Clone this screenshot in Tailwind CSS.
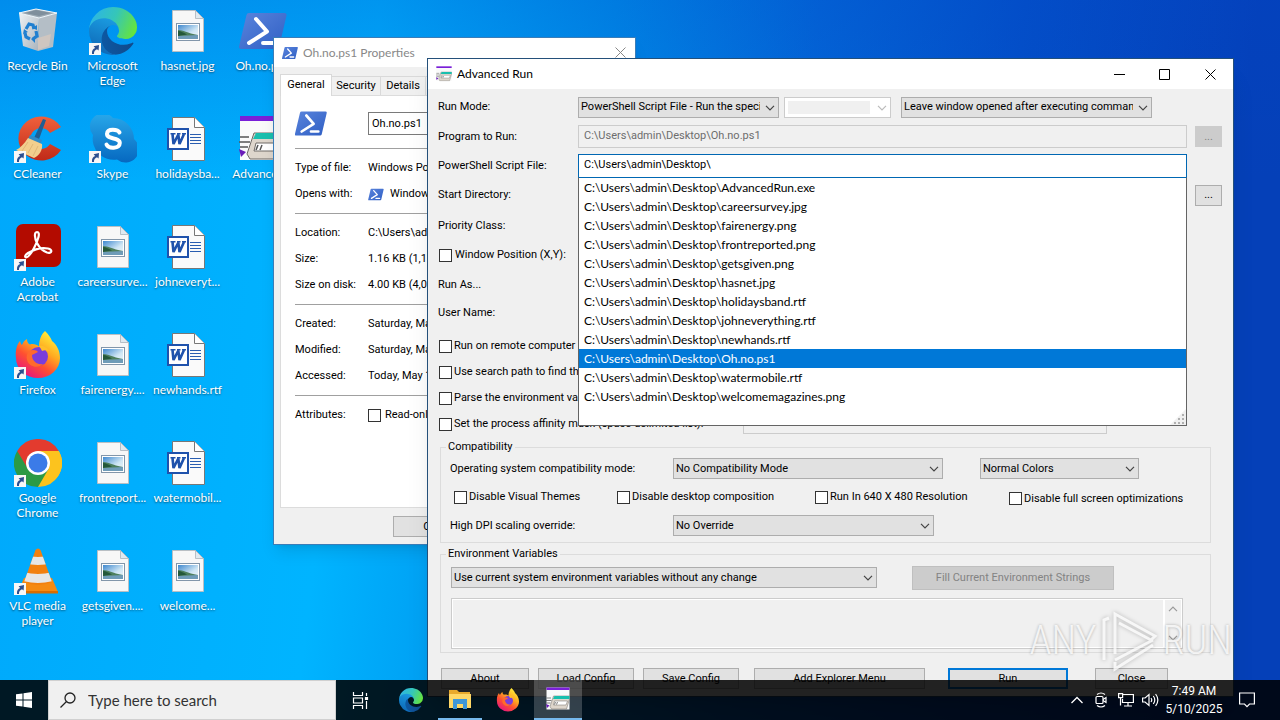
<!DOCTYPE html>
<html lang="en">
<head>
  <meta charset="UTF-8">
  <meta name="viewport" content="width=device-width, initial-scale=1.0">
  <title>Desktop</title>
  <!-- Tailwind CSS -->
  <script src="https://cdn.jsdelivr.net/npm/@tailwindcss/browser@4"></script>
</head>
<body class="relative h-screen overflow-hidden bg-[linear-gradient(to_bottom,rgba(0,70,200,0.28),transparent_25%),linear-gradient(97deg,#00a8fb_0%,#00b4ff_28%,#0090ea_45%,#0468d8_60%,#0450c8_75%,#0540b8_92%)] font-['Roboto','Liberation_Sans',sans-serif] text-[11px] leading-[14px] text-black">

  <!-- Icon library -->
  <svg class="absolute size-0" aria-hidden="true">
    <defs>
      <linearGradient id="g-ps" x1="0" y1="0" x2="1" y2="1"><stop offset="0" stop-color="#5a84dc"/><stop offset="1" stop-color="#2f5fc4"/></linearGradient>
      <linearGradient id="g-edge1" x1="0" y1="0" x2="1" y2="0"><stop offset="0" stop-color="#0c59a4"/><stop offset="1" stop-color="#114a8b"/></linearGradient>
      <linearGradient id="g-edge2" x1="0.6" y1="0" x2="0.3" y2="1"><stop offset="0" stop-color="#1b9de2"/><stop offset="1" stop-color="#0d66b5"/></linearGradient>
      <linearGradient id="g-edge3" x1="0" y1="0.3" x2="1" y2="0.6"><stop offset="0" stop-color="#2cb4e8"/><stop offset="0.5" stop-color="#35c6b8"/><stop offset="1" stop-color="#66e43c"/></linearGradient>
      <linearGradient id="g-fox" x1="0.8" y1="0.1" x2="0.25" y2="0.95"><stop offset="0" stop-color="#ffe838"/><stop offset="0.35" stop-color="#ffa820"/><stop offset="0.65" stop-color="#ff5030"/><stop offset="1" stop-color="#e8187c"/></linearGradient>
      <linearGradient id="g-sky" x1="0" y1="0" x2="1" y2="1"><stop offset="0" stop-color="#3f88cf"/><stop offset="0.6" stop-color="#cfe6f4"/><stop offset="1" stop-color="#eef6fa"/></linearGradient>
      <linearGradient id="g-skype" x1="0" y1="0" x2="0" y2="1"><stop offset="0" stop-color="#28a8ea"/><stop offset="1" stop-color="#0668c0"/></linearGradient>
      <linearGradient id="g-cc" x1="0" y1="0" x2="0" y2="1"><stop offset="0" stop-color="#f0603c"/><stop offset="1" stop-color="#c02a18"/></linearGradient>
      <linearGradient id="g-bin" x1="0" y1="0" x2="1" y2="1"><stop offset="0" stop-color="#eef2f5"/><stop offset="1" stop-color="#a9b3bc"/></linearGradient>
      <clipPath id="c-cone"><path d="M21.500 3q2.500-3 5 0L38 35q-14 6-28 0z"/></clipPath>
    </defs>

    <symbol id="i-shortcut" viewBox="0 0 12 12">
      <rect width="12" height="12" fill="#f7f7f7"/>
      <path d="M3 11C2.600 7.500 4 5.500 6.200 5L4.600 3.300 10 2 9.600 7.600 8 6.300C6 7 4.800 8.500 5 11z" fill="#2b4f90"/>
    </symbol>

    <symbol id="i-bin" viewBox="0 0 48 48">
      <path d="M5 6l20 5-1 33-15-5z" fill="url(#g-bin)"/>
      <path d="M25 11l18-5-4 34-15 4z" fill="#b4bec6"/>
      <path d="M5 6l17-4 21 4-18 5z" fill="#9eabb5" stroke="#f5f8fa"/>
      <path d="M22 3l15 3-12 3-14-3z" fill="#7f8f9c"/>
      <path d="M24 31l13-4-2 12-11 4z" fill="#cfc6c0"/>
      <g fill="none" stroke="#1f7fd0" stroke-width="3.200">
        <path d="M12 22l3-5 4 1 1 4"/><path d="M22 24l1 5-4 3"/><path d="M16 32l-4-2-1-4"/>
      </g>
      <path d="M18 21l5 2 0-5zM21 29l-4 3 4 4zM9 27l5-2-4-3z" fill="#1f7fd0"/>
    </symbol>

    <symbol id="i-edge" viewBox="0 0 256 256">
      <path fill="url(#g-edge1)" d="M231 190.500c-3.400 1.800-6.900 3.400-10.500 4.700a101.800 101.800 0 01-35.900 6.500c-47.300 0-88.500-32.500-88.500-74.300 0-11.400 6.400-21.900 16.400-27.300-42.800 1.800-53.800 46.400-53.800 72.500 0 73.900 68.100 81.400 82.800 81.400 7.900 0 19.800-2.300 27-4.600l1.300-.4a128.300 128.300 0 0066.600-52.800 4 4 0 00-5.400-5.700z"/>
      <path fill="url(#g-edge2)" d="M105.700 241.400a79.200 79.200 0 01-22.700-21.300 80.700 80.700 0 0129.500-120c3.200-1.500 8.500-4.100 15.600-4a32.400 32.400 0 0125.700 13 31.900 31.900 0 016.300 18.700c0-.2 24.500-79.600-80-79.600-43.900 0-80 41.700-80 78.200a130.200 130.200 0 0012.100 56 128 128 0 00156.400 67 75.500 75.500 0 01-62.900-8z"/>
      <path fill="url(#g-edge3)" d="M152.300 148.900c-.8 1-3.300 2.500-3.300 5.700 0 2.600 1.700 5.100 4.700 7.200 14.400 10 41.500 8.700 41.600 8.700a59.600 59.600 0 0030.300-8.300 61.400 61.400 0 0030.400-52.900c.3-22.400-8-37.300-11.300-43.900C223.500 23.900 177.700 0 128 0A128 128 0 000 126.200c.5-36.500 36.800-66 80-66 3.500 0 23.500.3 42 10a72.600 72.600 0 0130.900 29.300c6.100 10.600 7.200 24.100 7.200 29.500s-2.700 13.300-7.800 19.900z"/>
    </symbol>

    <symbol id="i-image" viewBox="0 0 48 48">
      <path d="M8.500 3.500h23l8 8v33h-31z" fill="#f7f7f7" stroke="#b9bfc4"/>
      <path d="M31.500 3.500v8h8z" fill="#dfe9f0" stroke="#a9b3ba" stroke-width=".8"/>
      <rect x="12.500" y="16.500" width="23" height="17" fill="#fff" stroke="#8296aa"/>
      <rect x="14" y="18" width="20" height="14" fill="url(#g-sky)"/>
      <path d="M14 23c5 0 9 3 20 5v4H14z" fill="#4d7f5c"/>
      <path d="M14 24c3 0 6 2 9 3.500L14 29z" fill="#24583a"/>
      <path d="M14 29l20-1v4H14z" fill="#6f9cb8"/>
    </symbol>

    <symbol id="i-word" viewBox="0 0 48 48">
      <path d="M8.500 2.500h22l10 10v33h-32z" fill="#fafafa" stroke="#777"/>
      <path d="M30.500 2.500v10h10" fill="#fff" stroke="#777"/>
      <path d="M26 19.500h11M26 22.500h11M26 25.500h11M26 28.500h11" stroke="#2a5db0"/>
      <rect x="4" y="14" width="20" height="20" fill="#fff" stroke="#1f52ac" stroke-width="2"/>
      <path d="M8.500 19l1 10L14.300 19.500l1.200 9.500L20 19" fill="none" stroke="#1f52ac" stroke-width="2.600" stroke-linejoin="bevel"/>
      <path d="M6.500 18.800h5M13 18.800h3.500M18 18.800h4" stroke="#1f52ac" stroke-width="1.400"/>
    </symbol>

    <symbol id="i-ps" viewBox="0 0 48 40">
      <path d="M10 2h35.500a2 2 0 012 2.500l-7.500 32a2.500 2.500 0 01-2.500 1.500H2a2 2 0 01-2-2.500L7.500 4A2.500 2.500 0 0110 2z" fill="url(#g-ps)"/>
      <path d="M17 8l11 12.500L10 32M24 32h11" fill="none" stroke="#fff" stroke-width="4" stroke-linecap="round" stroke-linejoin="round"/>
    </symbol>

    <symbol id="i-ccleaner" viewBox="0 0 48 48">
      <path d="M47 12A23 22 0 1 0 47 35L36 29A10.500 10.500 0 1 1 36 18z" fill="url(#g-cc)"/>
      <path d="M29 4l3 1-8 22-5-2z" fill="#1f5f94"/>
      <path d="M16 20l12 5-2 6-13-5z" fill="#2f8cc8"/>
      <path d="M14 23l14 6c1 6-3 12-8 14L2 35c4-2 8-6 12-12z" fill="#f2cf8d"/>
      <path d="M14 27L8 36M19 29l-5 9M24 31l-5 10" stroke="#e0b878"/>
    </symbol>

    <symbol id="i-skype" viewBox="0 0 48 48">
      <path d="M24 3A21 21 0 0145 24a12 12 0 01-17 20.500A21 21 0 014 20 12 12 0 0124 3z" fill="url(#g-skype)"/>
      <path d="M30.500 17.500C29 14.500 18.500 13 18 18.800 17.800 25 31 22 30.800 28 30.500 34 19.500 34 17.500 29.500" fill="none" stroke="#fff" stroke-width="4" stroke-linecap="round"/>
    </symbol>

    <symbol id="i-acrobat" viewBox="0 0 48 48">
      <rect x="2" y="1" width="45" height="43" rx="7" fill="#b30b00"/>
      <path d="M23 9c-3 0-2.500 6 0 11 2 4 6 8 10 9.500 5 1.500 6-3 1-4C27 24 19 27 14 30c-4.500 3-3 6 0 3.500C18 30 23 20 24.500 14c.7-3 .3-5-1.500-5z" fill="none" stroke="#fff" stroke-width="2.200"/>
    </symbol>

    <symbol id="i-firefox" viewBox="0 0 48 48">
      <path d="M31 0c4 4 6 7 7 10 5 4 8 10 8 17A22 20 0 012 27C1 20 3 13 6 10c.5 2 1 3 2 4 1-3 3-5 5-6 0 3 1 4.500 3 5.500 3-1 7 0 9 2 0-6 2-12 6-15.500z" fill="url(#g-fox)"/>
      <circle cx="24.500" cy="25.500" r="9.500" fill="#7a3ddb"/>
      <path d="M15 20c4-2 8-1 9 1-2 1-4 2-6 3 0 6 5 10 11 9-5 5-14 3-16-4-1-3 0-7 2-9z" fill="#ff6a2c"/>
      <path d="M25 15c3-1 8 1 10 5-3-1-5-1-7 0-1-2-2-4-3-5z" fill="#ffbe2a"/>
    </symbol>

    <symbol id="i-chrome" viewBox="0 0 48 48">
      <path d="M24 24L44.800 12A24 24 0 0124 48z" fill="#fcc31e"/>
      <path d="M24 24V48A24 24 0 013.200 12z" fill="#2b9a46"/>
      <path d="M24 12h20.800a24 24 0 01-3 28z" fill="#fcc31e"/>
      <path d="M3.200 12A24 24 0 0144.800 12H24L14 30z" fill="#e33b2e"/>
      <path d="M34.500 30L24 48 13 29z" fill="#2b9a46"/>
      <circle cx="24" cy="24" r="12" fill="#fff"/>
      <circle cx="24" cy="24" r="9.500" fill="#3b7be8"/>
    </symbol>

    <symbol id="i-vlc" viewBox="0 0 48 48">
      <path d="M10 31h28l6 14H4z" fill="#f58a12"/>
      <path d="M4 44h40v2.500H4z" fill="#d76c00"/>
      <g clip-path="url(#c-cone)">
        <path d="M0 0h48v48H0z" fill="#f2800f"/>
        <path d="M10 8q14 4 28 0v8q-14 4-28 0zM5 24q19 6 38 0v9q-19 6-38 0z" fill="#e6e6e6"/>
      </g>
    </symbol>

    <symbol id="i-advrun" viewBox="0 0 48 48">
      <path d="M1 1h46v44H1z" fill="#fafafa"/>
      <path d="M1 1h46v5H1z" fill="#7a1fd8"/>
      <path d="M1 22h9M0 27h11M1 32h8" stroke="#555" stroke-width="1.500"/>
      <path d="M0 34l7 3-5 5z" fill="#6a1bb8"/>
      <path d="M15 18h32v6l-6 20H11l-3-5z" fill="#ded6cc" stroke="#6e6a66"/>
      <path d="M17 18h30v6H14z" fill="#19bfae"/>
      <path d="M17 28h26l-3 8H15z" fill="#fff" stroke="#6e6a66"/>
      <path d="M19 30l-2 5M23 30l-2 5" stroke="#555" stroke-width="1.500"/>
    </symbol>

    <symbol id="i-folder" viewBox="0 0 24 24">
      <path d="M1 3h8l2 2h11v16H1z" fill="#e8a92c"/>
      <path d="M1 7h22v14H1z" fill="#ffd766"/>
      <path d="M5 12h14v10h-4v-5H9v5H5z" fill="#3f97d8"/>
    </symbol>

    <symbol id="i-chevron" viewBox="0 0 10 6">
      <path d="M1 .8l4 4 4-4" fill="none" stroke="currentColor" stroke-width="1.200"/>
    </symbol>
  </svg>

  <!-- Desktop icons -->
  <main class="grid h-[655px] w-[300px] auto-cols-[75px] grid-flow-col grid-rows-[repeat(6,108px)] pt-[7px] text-center font-['Lato','Open_Sans',sans-serif] text-[12px] leading-[15px] text-white [text-shadow:0_1px_2px_rgba(0,0,0,0.5)]">
    <div class="flex flex-col items-center gap-[3px]"><svg class="size-12"><use href="#i-bin"/></svg><span class="w-[76px]">Recycle Bin</span></div>
    <div class="flex flex-col items-center gap-[3px]"><div class="relative size-12"><svg class="size-12"><use href="#i-ccleaner"/></svg><svg class="absolute bottom-0 left-0 size-3"><use href="#i-shortcut"/></svg></div><span class="w-[76px]">CCleaner</span></div>
    <div class="flex flex-col items-center gap-[3px]"><div class="relative size-12"><svg class="size-12"><use href="#i-acrobat"/></svg><svg class="absolute bottom-0 left-0 size-3"><use href="#i-shortcut"/></svg></div><span class="w-[60px]">Adobe Acrobat</span></div>
    <div class="flex flex-col items-center gap-[3px]"><div class="relative size-12"><svg class="size-12"><use href="#i-firefox"/></svg><svg class="absolute bottom-0 left-0 size-3"><use href="#i-shortcut"/></svg></div><span class="w-[76px]">Firefox</span></div>
    <div class="flex flex-col items-center gap-[3px]"><div class="relative size-12"><svg class="size-12"><use href="#i-chrome"/></svg><svg class="absolute bottom-0 left-0 size-3"><use href="#i-shortcut"/></svg></div><span class="w-[60px]">Google Chrome</span></div>
    <div class="flex flex-col items-center gap-[3px]"><div class="relative size-12"><svg class="size-12"><use href="#i-vlc"/></svg><svg class="absolute bottom-0 left-0 size-3"><use href="#i-shortcut"/></svg></div><span class="w-[76px]">VLC media player</span></div>

    <div class="flex flex-col items-center gap-[3px]"><div class="relative size-12"><svg class="size-12"><use href="#i-edge"/></svg><svg class="absolute bottom-0 left-0 size-3"><use href="#i-shortcut"/></svg></div><span class="w-[60px]">Microsoft Edge</span></div>
    <div class="flex flex-col items-center gap-[3px]"><div class="relative size-12"><svg class="size-12"><use href="#i-skype"/></svg><svg class="absolute bottom-0 left-0 size-3"><use href="#i-shortcut"/></svg></div><span class="w-[76px]">Skype</span></div>
    <div class="flex flex-col items-center gap-[3px]"><svg class="size-12"><use href="#i-image"/></svg><span class="w-[76px]">careersurve...</span></div>
    <div class="flex flex-col items-center gap-[3px]"><svg class="size-12"><use href="#i-image"/></svg><span class="w-[76px]">fairenergy....</span></div>
    <div class="flex flex-col items-center gap-[3px]"><svg class="size-12"><use href="#i-image"/></svg><span class="w-[76px]">frontreport...</span></div>
    <div class="flex flex-col items-center gap-[3px]"><svg class="size-12"><use href="#i-image"/></svg><span class="w-[76px]">getsgiven....</span></div>

    <div class="flex flex-col items-center gap-[3px]"><svg class="size-12"><use href="#i-image"/></svg><span class="w-[76px]">hasnet.jpg</span></div>
    <div class="flex flex-col items-center gap-[3px]"><svg class="size-12"><use href="#i-word"/></svg><span class="w-[76px]">holidaysba...</span></div>
    <div class="flex flex-col items-center gap-[3px]"><svg class="size-12"><use href="#i-word"/></svg><span class="w-[76px]">johneveryt...</span></div>
    <div class="flex flex-col items-center gap-[3px]"><svg class="size-12"><use href="#i-word"/></svg><span class="w-[76px]">newhands.rtf</span></div>
    <div class="flex flex-col items-center gap-[3px]"><svg class="size-12"><use href="#i-word"/></svg><span class="w-[76px]">watermobil...</span></div>
    <div class="flex flex-col items-center gap-[3px]"><svg class="size-12"><use href="#i-image"/></svg><span class="w-[76px]">welcome...</span></div>

    <div class="flex flex-col items-center gap-[3px]"><svg class="size-12"><use href="#i-ps"/></svg><span class="w-[76px]">Oh.no.ps1</span></div>
    <div class="flex flex-col items-center gap-[3px]"><svg class="size-12"><use href="#i-advrun"/></svg><span class="w-[76px]">Advanced...</span></div>
  </main>

  <!-- File properties window -->
  <section class="absolute top-[37px] left-[273px] flex w-[363px] flex-col border border-[#3a7db8] bg-[#f0f0f0] pb-[7px] shadow-lg">
    <header class="flex h-[29px] items-center bg-white pl-2 font-['Lato','Open_Sans',sans-serif] text-[12px] text-[#888]">
      <svg class="mr-[5px] h-[14px] w-4"><use href="#i-ps"/></svg>
      <h2 class="flex-1">Oh.no.ps1 Properties</h2>
      <button class="flex h-full w-[30px] items-center justify-center" aria-label="Close properties">
        <svg class="size-[11px]" viewBox="0 0 11 11"><path d="M.5.5l10 10M10.500.5l-10 10" stroke="#888"/></svg>
      </button>
    </header>
    <nav class="flex items-end pt-[7px] pl-[6px]">
      <button class="z-10 -mb-px h-[22px] w-[52px] border border-b-0 border-[#d9d9d9] bg-white pb-[2px]">General</button>
      <button class="h-[19px] w-[49px] border border-b-0 border-l-0 border-[#d9d9d9]">Security</button>
      <button class="h-[19px] w-[45px] border border-b-0 border-l-0 border-[#d9d9d9]">Details</button>
      <button class="h-[19px] w-[100px] border border-b-0 border-l-0 border-[#d9d9d9]">Previous Versions</button>
    </nav>
    <div class="mx-[6px] flex h-[413px] flex-col border border-[#dcdcdc] bg-white px-[14px] pt-[14px]">
      <div class="flex items-center">
        <svg class="mr-[41px] h-[27px] w-8"><use href="#i-ps"/></svg>
        <input aria-label="File name" class="h-[23px] flex-1 border border-[#7a7a7a] px-[3px]" value="Oh.no.ps1">
      </div>
      <hr class="mt-[11px] mb-[6px] border-[#a0a0a0]">
      <dl class="grid auto-rows-[26px] grid-cols-[73px_1fr] items-center">
        <dt>Type of file:</dt><dd class="whitespace-nowrap">Windows PowerShell Script (.ps1)</dd>
        <dt>Opens with:</dt><dd class="flex items-center gap-[6px] whitespace-nowrap"><svg class="h-[13px] w-4"><use href="#i-ps"/></svg>Windows PowerShell</dd>
      </dl>
      <hr class="my-[6px] border-[#a0a0a0]">
      <dl class="grid auto-rows-[26px] grid-cols-[73px_1fr] items-center">
        <dt>Location:</dt><dd>C:\Users\admin\Desktop</dd>
        <dt>Size:</dt><dd>1.16 KB (1,188 bytes)</dd>
        <dt>Size on disk:</dt><dd>4.00 KB (4,096 bytes)</dd>
      </dl>
      <hr class="my-[6px] border-[#a0a0a0]">
      <dl class="grid auto-rows-[26px] grid-cols-[73px_1fr] items-center">
        <dt>Created:</dt><dd>Saturday, May 10, 2025</dd>
        <dt>Modified:</dt><dd>Saturday, May 10, 2025</dd>
        <dt>Accessed:</dt><dd>Today, May 10, 2025</dd>
      </dl>
      <hr class="my-[6px] border-[#a0a0a0]">
      <div class="flex h-[26px] items-center">
        <span class="w-[73px]">Attributes:</span>
        <label class="flex items-center gap-1"><input type="checkbox" class="size-[13px] appearance-none border border-[#333] bg-white">Read-only</label>
      </div>
    </div>
    <div class="flex justify-end gap-[6px] pt-2 pr-[5px]">
      <button class="h-[21px] w-[75px] border border-[#adadad] bg-[#e1e1e1]">OK</button>
      <button class="h-[21px] w-[75px] border border-[#adadad] bg-[#e1e1e1]">Cancel</button>
      <button class="h-[21px] w-[75px] border border-[#adadad] bg-[#e1e1e1]">Apply</button>
    </div>
  </section>

  <!-- Advanced Run window -->
  <section class="absolute top-[58px] left-[427px] flex w-[807px] flex-col border border-[#24507a] bg-[#f0f0f0] pb-[7px] shadow-xl">
    <header class="flex h-[30px] items-center bg-white pl-2 font-['Lato','Open_Sans',sans-serif] text-[12px]">
      <svg class="mr-[5px] size-4"><use href="#i-advrun"/></svg>
      <h1 class="flex-1">Advanced Run</h1>
      <button class="flex h-full w-[46px] items-center justify-center" aria-label="Minimize"><svg class="size-[11px]" viewBox="0 0 11 11"><path d="M0 5.500h11" stroke="#000"/></svg></button>
      <button class="flex h-full w-[45px] items-center justify-center" aria-label="Maximize"><svg class="size-[11px]" viewBox="0 0 11 11"><path d="M.5.500h10v10H.5z" fill="none" stroke="#000"/></svg></button>
      <button class="flex h-full w-[46px] items-center justify-center" aria-label="Close window"><svg class="size-[11px]" viewBox="0 0 11 11"><path d="M.5.500l10 10M10.500.500l-10 10" stroke="#000" fill="none"/></svg></button>
    </header>

    <div class="flex flex-col pr-[11px] pl-[10px]">
      <div class="flex h-[36px] items-center">
        <label for="mode" class="w-[140px]">Run Mode:</label>
        <div class="relative mr-[5px] w-[201px]">
          <select id="mode" class="h-[21px] w-full appearance-none border border-[#adadad] bg-[#e1e1e1] pr-[18px] pl-[2px]"><option>PowerShell Script File - Run the specified script</option></select>
          <svg class="pointer-events-none absolute top-2 right-1 h-[6px] w-[10px] text-[#444]"><use href="#i-chevron"/></svg>
        </div>
        <div class="relative mr-[10px] w-[107px]">
          <select disabled aria-label="Run mode option" class="h-[21px] w-full appearance-none border border-[#ccc] bg-[#f0f0f0] bg-clip-content py-[2px] pr-[18px] pl-[2px] shadow-[inset_0_0_0_3px_#fff,inset_-20px_0_0_#fff]"></select>
          <svg class="pointer-events-none absolute top-2 right-1 h-[6px] w-[10px] text-[#bbb]"><use href="#i-chevron"/></svg>
        </div>
        <div class="relative w-[251px]">
          <select aria-label="Console window" class="h-[21px] w-full appearance-none border border-[#adadad] bg-[#e1e1e1] pr-[18px] pl-[2px]"><option>Leave window opened after executing command</option></select>
          <svg class="pointer-events-none absolute top-2 right-1 h-[6px] w-[10px] text-[#444]"><use href="#i-chevron"/></svg>
        </div>
      </div>

      <div class="flex h-[23px] items-center">
        <label for="program" class="w-[140px]">Program to Run:</label>
        <input id="program" disabled class="mr-2 h-[23px] flex-1 border border-[#ccc] px-[5px] pb-[3px] text-[#6d6d6d]" value="C:\Users\admin\Desktop\Oh.no.ps1">
        <button disabled class="h-[21px] w-[27px] bg-[#ccc] text-[#838383]">...</button>
      </div>

      <div class="flex h-[36px] items-center">
        <label for="script" class="w-[140px]">PowerShell Script File:</label>
        <div class="relative mr-[35px] flex-1">
          <input id="script" class="block h-[24px] w-full border border-[#0067b3] bg-white px-[5px] pb-[3px]" value="C:\Users\admin\Desktop\">
          <!-- Autocomplete list -->
          <ul class="absolute top-[23px] left-0 z-20 w-full border border-[#646464] border-t-[#0067b3] bg-white pb-[19px] font-['Lato','Open_Sans',sans-serif] text-[12px] leading-[19px]">
            <li class="px-[5px]">C:\Users\admin\Desktop\AdvancedRun.exe</li>
            <li class="px-[5px]">C:\Users\admin\Desktop\careersurvey.jpg</li>
            <li class="px-[5px]">C:\Users\admin\Desktop\fairenergy.png</li>
            <li class="px-[5px]">C:\Users\admin\Desktop\frontreported.png</li>
            <li class="px-[5px]">C:\Users\admin\Desktop\getsgiven.png</li>
            <li class="px-[5px]">C:\Users\admin\Desktop\hasnet.jpg</li>
            <li class="px-[5px]">C:\Users\admin\Desktop\holidaysband.rtf</li>
            <li class="px-[5px]">C:\Users\admin\Desktop\johneverything.rtf</li>
            <li class="px-[5px]">C:\Users\admin\Desktop\newhands.rtf</li>
            <li class="bg-[#0078d7] px-[5px] text-white">C:\Users\admin\Desktop\Oh.no.ps1</li>
            <li class="px-[5px]">C:\Users\admin\Desktop\watermobile.rtf</li>
            <li class="px-[5px]">C:\Users\admin\Desktop\welcomemagazines.png</li>
            <li class="absolute right-0 bottom-0 flex size-4 bg-[#f0f0f0] [clip-path:polygon(100%_0,100%_100%,0_100%)]" aria-hidden="true">
              <svg class="size-4" viewBox="0 0 16 16"><path d="M12 5h2v2h-2zM8 9h2v2H8zM12 9h2v2h-2zM4 13h2v2H4zM8 13h2v2H8zM12 13h2v2h-2z" fill="#b0b0b0"/></svg>
            </li>
          </ul>
        </div>
      </div>

      <div class="flex h-[22px] items-center">
        <span class="flex-1">Start Directory:</span>
        <button class="h-[21px] w-[27px] border border-[#adadad] bg-[#e1e1e1]" aria-label="Browse start directory">...</button>
      </div>
      <div class="flex h-[39px] items-center">Priority Class:</div>
      <label class="flex h-[20px] items-center gap-[3px]"><input type="checkbox" class="ml-px size-[13px] appearance-none border border-[#333] bg-white">Window Position (X,Y):</label>
      <div class="flex h-[40px] items-center">Run As...</div>
      <div class="mb-3 flex h-[16px] items-center">User Name:</div>
      <label class="flex h-[26px] items-center gap-[2px]"><input type="checkbox" class="ml-px size-[13px] appearance-none border border-[#333] bg-white">Run on remote computer using</label>
      <label class="flex h-[26px] items-center gap-[2px]"><input type="checkbox" class="ml-px size-[13px] appearance-none border border-[#333] bg-white">Use search path to find the program</label>
      <label class="flex h-[26px] items-center gap-[2px]"><input type="checkbox" class="ml-px size-[13px] appearance-none border border-[#333] bg-white">Parse the environment variables</label>
      <div class="flex h-[26px] items-center">
        <label class="flex w-[305px] items-center gap-[2px]"><input type="checkbox" class="ml-px size-[13px] appearance-none border border-[#333] bg-white">Set the process affinity mask (space-delimited list):</label>
        <input aria-label="Affinity mask" disabled class="h-[19px] w-[364px] border border-[#ccc]">
      </div>
    </div>

    <fieldset class="mt-[3px] mr-[22px] mb-1 ml-3 border border-[#dcdcdc] pb-[2px]">
      <legend class="ml-[5px] px-[2px]">Compatibility</legend>
      <div class="flex h-[29px] items-center pl-[9px]">
        <label for="oscompat" class="w-[223px]">Operating system compatibility mode:</label>
        <div class="relative mr-[37px] w-[270px]">
          <select id="oscompat" class="h-[21px] w-full appearance-none border border-[#adadad] bg-[#e1e1e1] pr-[18px] pl-[2px]"><option>No Compatibility Mode</option></select>
          <svg class="pointer-events-none absolute top-2 right-1 h-[6px] w-[10px] text-[#444]"><use href="#i-chevron"/></svg>
        </div>
        <div class="relative w-[159px]">
          <select aria-label="Colors" class="h-[21px] w-full appearance-none border border-[#adadad] bg-[#e1e1e1] pr-[18px] pl-[2px]"><option>Normal Colors</option></select>
          <svg class="pointer-events-none absolute top-2 right-1 h-[6px] w-[10px] text-[#444]"><use href="#i-chevron"/></svg>
        </div>
      </div>
      <div class="flex h-[28px] items-center pl-[13px]">
        <label class="flex w-[163px] items-center gap-[2px]"><input type="checkbox" class="size-[13px] appearance-none border border-[#333] bg-white">Disable Visual Themes</label>
        <label class="flex w-[198px] items-center gap-[2px]"><input type="checkbox" class="size-[13px] appearance-none border border-[#333] bg-white">Disable desktop composition</label>
        <label class="flex w-[194px] items-center gap-[2px]"><input type="checkbox" class="size-[13px] appearance-none border border-[#333] bg-white">Run In 640 X 480 Resolution</label>
        <label class="flex items-center gap-[2px] pt-[3px]"><input type="checkbox" class="size-[13px] appearance-none border border-[#333] bg-white">Disable full screen optimizations</label>
      </div>
      <div class="flex h-[29px] items-center pl-[9px]">
        <label for="dpi" class="w-[223px]">High DPI scaling override:</label>
        <div class="relative w-[261px]">
          <select id="dpi" class="h-[21px] w-full appearance-none border border-[#adadad] bg-[#e1e1e1] pr-[18px] pl-[2px]"><option>No Override</option></select>
          <svg class="pointer-events-none absolute top-2 right-1 h-[6px] w-[10px] text-[#444]"><use href="#i-chevron"/></svg>
        </div>
      </div>
    </fieldset>

    <fieldset class="mr-[22px] ml-3 border border-[#dcdcdc] px-[10px] pb-[3px]">
      <legend class="-ml-[5px] px-[2px]">Environment Variables</legend>
      <div class="flex h-[33px] items-center">
        <div class="relative mr-[35px] w-[426px]">
          <select aria-label="Environment variables mode" class="h-[21px] w-full appearance-none border border-[#adadad] bg-[#e1e1e1] pr-[18px] pl-[2px]"><option>Use current system environment variables without any change</option></select>
          <svg class="pointer-events-none absolute top-2 right-1 h-[6px] w-[10px] text-[#444]"><use href="#i-chevron"/></svg>
        </div>
        <button disabled class="h-[24px] w-[202px] border border-[#bfbfbf] bg-[#ccc] text-[#838383]">Fill Current Environment Strings</button>
      </div>
      <div class="mt-[4px] mr-[17px] flex h-[51px] border border-[#ccc]">
        <textarea disabled aria-label="Environment strings" class="flex-1 resize-none border border-white"></textarea>
        <div class="flex w-[18px] flex-col items-center justify-between border border-white py-[6px] text-[#999]">
          <svg class="h-[6px] w-[10px] rotate-180"><use href="#i-chevron"/></svg>
          <svg class="h-[6px] w-[10px]"><use href="#i-chevron"/></svg>
        </div>
      </div>
    </fieldset>

    <footer class="flex pt-[15px] pl-[13px]">
      <button class="mr-[9px] h-[21px] w-[88px] border border-[#adadad] bg-[#e1e1e1]">About</button>
      <button class="mr-[9px] h-[21px] w-[96px] border border-[#adadad] bg-[#e1e1e1]">Load Config</button>
      <button class="mr-[15px] h-[21px] w-[96px] border border-[#adadad] bg-[#e1e1e1]">Save Config</button>
      <button class="mr-[23px] h-[21px] w-[171px] border border-[#adadad] bg-[#e1e1e1]">Add Explorer Menu</button>
      <button class="mr-[27px] h-[21px] w-[120px] border-2 border-[#0078d7] bg-[#e1e1e1]">Run</button>
      <button class="h-[21px] w-[73px] border border-[#adadad] bg-[#e1e1e1]">Close</button>
    </footer>
  </section>

  <!-- Watermark -->
  <div class="absolute right-[48px] bottom-[46px] flex h-[66px] items-center gap-1 font-['Roboto_Condensed','Open_Sans_Condensed',sans-serif] text-[40px] leading-[66px] font-light text-white/80 [text-shadow:0_0_3px_rgba(0,0,0,0.3)]">
    <span>ANY</span>
    <svg class="h-[62px] w-[58px] drop-shadow-[0_0_2px_rgba(0,0,0,0.3)]" viewBox="0 0 58 62" fill="none" stroke="#fff" stroke-opacity=".8" stroke-width="3">
      <path d="M3 50V10l5-2M14 44V4l40 22-4 4-32-17M14 50l38-20M14 52v7l38-24"/>
    </svg>
    <span>RUN</span>
  </div>

  <!-- Taskbar -->
  <footer class="absolute inset-x-0 bottom-0 flex h-10 items-stretch bg-black/86 text-white">
    <button class="flex w-12 items-center justify-center" aria-label="Start">
      <svg class="size-4" viewBox="0 0 16 16" fill="#fff"><path d="M0 2.300l6.500-.9v6.100H0zM7.500 1.300L16 0v7.500H7.500zM0 8.500h6.500v6.100L0 13.700zM7.500 8.500H16V16l-8.500-1.300z"/></svg>
    </button>
    <label class="flex w-[288px] items-center border border-[#d0d0d0] bg-[#f0f0f0] pl-[11px]">
      <svg class="mr-3 size-4" viewBox="0 0 16 16" fill="none" stroke="#222" stroke-width="1.300"><circle cx="10" cy="6" r="5"/><path d="M6.500 9.500L.5 15.500"/></svg>
      <input aria-label="Search" class="min-w-0 flex-1 font-['Lato','Open_Sans',sans-serif] text-[15px] text-black placeholder:text-[#333]" placeholder="Type here to search">
    </label>
    <button class="flex w-12 items-center justify-center" aria-label="Task View">
      <svg class="size-[17px]" viewBox="0 0 17 17" fill="none" stroke="#fff" stroke-width="1.200"><path d="M1.500 0v3.500h9V0M1.500 17v-3.500h9V17M1.500 6h9v5h-9zM14.500 1v3M14.500 9v8"/><path d="M13.500 5.500h2v2h-2z" fill="#fff"/></svg>
    </button>
    <button class="flex w-[54px] items-center justify-center" aria-label="Microsoft Edge"><svg class="size-6"><use href="#i-edge"/></svg></button>
    <button class="flex w-[44px] items-center justify-center border-b-2 border-[#76b9ed]" aria-label="File Explorer"><svg class="size-6"><use href="#i-folder"/></svg></button>
    <button class="flex w-[52px] items-center justify-center" aria-label="Firefox"><svg class="size-6"><use href="#i-firefox"/></svg></button>
    <button class="flex w-12 items-center justify-center border-b-2 border-[#76b9ed] bg-white/20" aria-label="Advanced Run"><svg class="size-6"><use href="#i-advrun"/></svg></button>

    <div class="ml-auto flex items-center font-['Roboto',sans-serif] text-[12px] leading-[18px]">
      <svg class="mr-3 h-[8px] w-3" viewBox="0 0 12 8" fill="none" stroke="#fff" stroke-width="1.300"><path d="M.5 7L6 1.500 11.500 7"/></svg>
      <svg class="mr-[11px] h-4 w-3" viewBox="0 0 12 16" fill="none" stroke="#fff" stroke-width="1.200"><rect x="1" y="4.500" width="7" height="7" rx="1"/><path d="M8 7.500l3-2v5l-3-2M2 2.500q4-3 8 0M2 13.500q4 3 8 0"/></svg>
      <svg class="mr-2 h-[14px] w-4" viewBox="0 0 16 14" fill="none" stroke="#fff" stroke-width="1.200"><path d="M5 1.500h10.400v8H4.500V6M10 9.500v3.500M6 13h8M.6.6h4v4h-4zM2.500 4.500v8"/></svg>
      <svg class="mr-[6px] h-[14px] w-[17px]" viewBox="0 0 17 14" fill="none" stroke="#fff" stroke-width="1.200"><path d="M.6 5h2.500L7 1.500v11L3.100 9H.6zM9 5q1.500 2 0 4M11.300 3q3 4 0 8M13.600 1q4.500 6 0 12"/></svg>
      <time class="mr-4 w-[58px] text-center">7:49 AM<br>5/10/2025</time>
      <svg class="mr-[25px] size-4" viewBox="0 0 16 16" fill="none" stroke="#fff" stroke-width="1.200"><path d="M.6 1h14.800v11H10.500L8 14.700 5.500 12H.6z"/></svg>
    </div>
  </footer>
</body>
</html>
